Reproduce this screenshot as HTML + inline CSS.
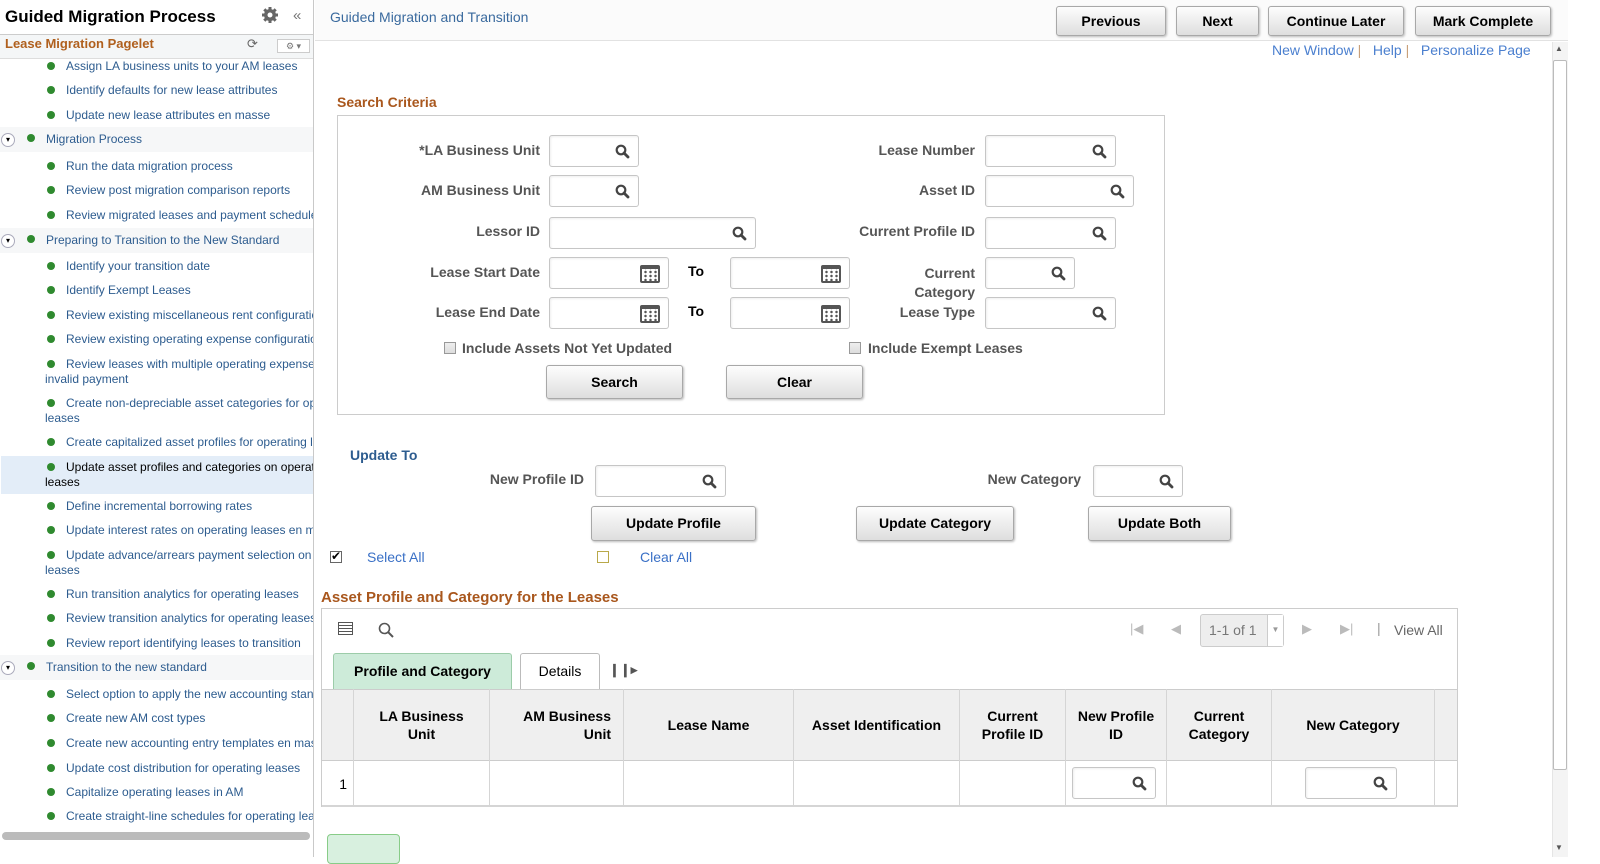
<!DOCTYPE html><html><head><style>
*{box-sizing:border-box}body{margin:0;width:1600px;height:857px;overflow:hidden;background:#fff;font-family:"Liberation Sans",Arial,sans-serif;position:relative}
.a{position:absolute;white-space:nowrap}
#side{position:absolute;left:0;top:0;width:314px;height:857px;border-right:1px solid #c9c9c9;overflow:hidden;background:#fff}
.it{position:absolute;left:0;width:314px;font-size:12px;color:#2d5c8f;line-height:15px;white-space:nowrap}
.it b{position:absolute;left:47px;top:3px;width:8px;height:8px;border-radius:50%;background:#2f8a2f}
.it span{position:absolute;left:66px}
.it i{position:absolute;left:45px;top:15px;font-style:normal}
.grp{background:#f6f7f8;height:25px}
.grp b{left:27px;top:7px}.grp span{left:46px;top:5px}
.tg{position:absolute;left:1px;top:6px;width:14px;height:14px;border:1px solid #aab;border-radius:50%;background:#fff;font-size:8px;line-height:12px;text-align:center;color:#000}
.btn{position:absolute;height:30px;border:1px solid #a8a8a8;border-radius:3px;background:linear-gradient(#fdfdfd,#dedede);box-shadow:1px 1px 2px #bbb;font-weight:bold;font-size:14px;color:#000;text-align:center;line-height:28px}
.lbl{position:absolute;font-size:14px;font-weight:bold;color:#555;text-align:right;white-space:nowrap}
.in{position:absolute;height:32px;border:1px solid #c6c6c6;border-radius:3px;background:#fff;box-shadow:inset 1px 1px 2px #eee}
.in svg{position:absolute;right:8px;top:8px}
.cal{position:absolute;right:8px;top:7px;width:20px;height:18px;border:2px solid #555;border-top-width:4px;border-radius:2px;background:radial-gradient(circle,#555 1px,transparent 1.5px) 1px 1px/5px 4px}
.th{position:absolute;top:689px;height:72px;border-right:1px solid #d5d5d5;font-size:14px;font-weight:bold;color:#000;display:flex;align-items:center;justify-content:center;text-align:center;line-height:18px}
.td{position:absolute;top:761px;height:45px;border-right:1px solid #d5d5d5}
.cb{position:absolute;width:12px;height:12px;border:1px solid #999;background:linear-gradient(#eee,#ddd)}
</style></head><body>
<div id="side">
<div class="a" style="left:5px;top:7px;font-size:17px;font-weight:bold;color:#000">Guided Migration Process</div>
<svg class="a" style="left:261px;top:6px" width="18" height="18" viewBox="0 0 18 18"><circle cx="9" cy="9" r="6" fill="#666"/><g stroke="#666" stroke-width="3"><line x1="9" y1="1" x2="9" y2="17"/><line x1="1" y1="9" x2="17" y2="9"/><line x1="3.3" y1="3.3" x2="14.7" y2="14.7"/><line x1="14.7" y1="3.3" x2="3.3" y2="14.7"/></g><circle cx="9" cy="9" r="2.5" fill="#fff"/></svg>
<div class="a" style="left:293px;top:7px;font-size:15px;color:#777">«</div>
<div class="a" style="left:0;top:34px;width:314px;height:25px;background:#f4f6f7;border-top:1px solid #ccc;border-bottom:1px solid #ddd"></div>
<div class="a" style="left:5px;top:36px;font-size:13px;font-weight:bold;color:#b0601e">Lease Migration Pagelet</div>
<div class="a" style="left:247px;top:36px;font-size:13px;color:#666">⟳</div>
<div class="a" style="left:277px;top:39px;width:33px;height:14px;border:1px solid #ccc;background:#fff;font-size:9px;color:#777;text-align:center;line-height:12px">⚙ ▾</div>
<div class="it" style="top:59px"><b></b><span>Assign LA business units to your AM leases</span></div>
<div class="it" style="top:83px"><b></b><span>Identify defaults for new lease attributes</span></div>
<div class="it" style="top:108px"><b></b><span>Update new lease attributes en masse</span></div>
<div class="it grp" style="top:127px"><div class="tg">▾</div><b></b><span>Migration Process</span></div>
<div class="it" style="top:159px"><b></b><span>Run the data migration process</span></div>
<div class="it" style="top:183px"><b></b><span>Review post migration comparison reports</span></div>
<div class="it" style="top:208px"><b></b><span>Review migrated leases and payment schedules</span></div>
<div class="it grp" style="top:228px"><div class="tg">▾</div><b></b><span>Preparing to Transition to the New Standard</span></div>
<div class="it" style="top:259px"><b></b><span>Identify your transition date</span></div>
<div class="it" style="top:283px"><b></b><span>Identify Exempt Leases</span></div>
<div class="it" style="top:308px"><b></b><span>Review existing miscellaneous rent configuration</span></div>
<div class="it" style="top:332px"><b></b><span>Review existing operating expense configuration</span></div>
<div class="it" style="top:357px"><b></b><span>Review leases with multiple operating expenses</span><i>invalid payment</i></div>
<div class="it" style="top:396px"><b></b><span>Create non-depreciable asset categories for operating</span><i>leases</i></div>
<div class="it" style="top:435px"><b></b><span>Create capitalized asset profiles for operating leases</span></div>
<div class="a" style="left:1px;top:456px;width:313px;height:38px;background:#e3edf8"></div>
<div class="it" style="top:460px;color:#000"><b></b><span>Update asset profiles and categories on operating</span><i>leases</i></div>
<div class="it" style="top:499px"><b></b><span>Define incremental borrowing rates</span></div>
<div class="it" style="top:523px"><b></b><span>Update interest rates on operating leases en masse</span></div>
<div class="it" style="top:548px"><b></b><span>Update advance/arrears payment selection on operating</span><i>leases</i></div>
<div class="it" style="top:587px"><b></b><span>Run transition analytics for operating leases</span></div>
<div class="it" style="top:611px"><b></b><span>Review transition analytics for operating leases</span></div>
<div class="it" style="top:636px"><b></b><span>Review report identifying leases to transition</span></div>
<div class="it grp" style="top:655px"><div class="tg">▾</div><b></b><span>Transition to the new standard</span></div>
<div class="it" style="top:687px"><b></b><span>Select option to apply the new accounting standard</span></div>
<div class="it" style="top:711px"><b></b><span>Create new AM cost types</span></div>
<div class="it" style="top:736px"><b></b><span>Create new accounting entry templates en masse</span></div>
<div class="it" style="top:761px"><b></b><span>Update cost distribution for operating leases</span></div>
<div class="it" style="top:785px"><b></b><span>Capitalize operating leases in AM</span></div>
<div class="it" style="top:809px"><b></b><span>Create straight-line schedules for operating leases</span></div>
<div class="a" style="left:2px;top:832px;width:308px;height:8px;border-radius:4px;background:#bbb"></div>
</div>

<div class="a" style="left:315px;top:0;width:1253px;height:41px;background:#fbfbfb;border-bottom:1px solid #e2e2e2"></div>
<div class="a" style="left:330px;top:9px;font-size:14px;color:#3a6a9e">Guided Migration and Transition</div>
<div class="btn" style="left:1056px;top:6px;width:110px">Previous</div>
<div class="btn" style="left:1176px;top:6px;width:83px">Next</div>
<div class="btn" style="left:1268px;top:6px;width:136px">Continue Later</div>
<div class="btn" style="left:1415px;top:6px;width:136px">Mark Complete</div>
<div class="a" style="left:1272px;top:42px;font-size:14px;color:#4a7fcf">New Window <span style="color:#c9a07a">|</span> &nbsp; Help <span style="color:#c9a07a">|</span> &nbsp; Personalize Page</div>
<div class="a" style="left:1552px;top:42px;width:16px;height:815px;background:#f4f4f4;border-left:1px solid #e5e5e5"></div>
<div class="a" style="left:1553px;top:60px;width:14px;height:710px;background:#fff;border:1px solid #bbb;border-radius:2px"></div>
<div class="a" style="left:1555px;top:44px;font-size:8px;color:#555">▲</div>
<div class="a" style="left:1555px;top:843px;font-size:8px;color:#555">▼</div>

<div class="a" style="left:337px;top:94px;font-size:14px;font-weight:bold;color:#a9571d">Search Criteria</div>
<div class="a" style="left:337px;top:115px;width:828px;height:300px;border:1px solid #ccc"></div>
<svg width="0" height="0" style="position:absolute"><defs><g id="mg"><circle cx="6" cy="6" r="4.3" fill="none" stroke="#444" stroke-width="2.2"/><line x1="9" y1="9" x2="13" y2="13" stroke="#444" stroke-width="2.8" stroke-linecap="round"/></g></defs></svg>

<div class="lbl" style="left:340px;width:200px;top:142px">*LA Business Unit</div>
<div class="in" style="left:549px;top:135px;width:90px"><svg width="15" height="15"><use href="#mg"/></svg></div>
<div class="lbl" style="left:340px;width:200px;top:182px">AM Business Unit</div>
<div class="in" style="left:549px;top:175px;width:90px"><svg width="15" height="15"><use href="#mg"/></svg></div>
<div class="lbl" style="left:340px;width:200px;top:223px">Lessor ID</div>
<div class="in" style="left:549px;top:217px;width:207px"><svg width="15" height="15"><use href="#mg"/></svg></div>
<div class="lbl" style="left:340px;width:200px;top:264px">Lease Start Date</div>
<div class="in" style="left:549px;top:257px;width:120px"><div class="cal"></div></div>
<div class="a" style="left:688px;top:263px;font-size:14px;font-weight:bold">To</div>
<div class="in" style="left:730px;top:257px;width:120px"><div class="cal"></div></div>
<div class="lbl" style="left:340px;width:200px;top:304px">Lease End Date</div>
<div class="in" style="left:549px;top:297px;width:120px"><div class="cal"></div></div>
<div class="a" style="left:688px;top:303px;font-size:14px;font-weight:bold">To</div>
<div class="in" style="left:730px;top:297px;width:120px"><div class="cal"></div></div>
<div class="cb" style="left:444px;top:342px"></div>
<div class="lbl" style="left:462px;top:340px">Include Assets Not Yet Updated</div>
<div class="btn" style="left:546px;top:365px;width:137px;height:34px;line-height:32px">Search</div>
<div class="btn" style="left:726px;top:365px;width:137px;height:34px;line-height:32px">Clear</div>

<div class="lbl" style="left:775px;width:200px;top:142px">Lease Number</div>
<div class="in" style="left:985px;top:135px;width:131px"><svg width="15" height="15"><use href="#mg"/></svg></div>
<div class="lbl" style="left:775px;width:200px;top:182px">Asset ID</div>
<div class="in" style="left:985px;top:175px;width:149px"><svg width="15" height="15"><use href="#mg"/></svg></div>
<div class="lbl" style="left:775px;width:200px;top:223px">Current Profile ID</div>
<div class="in" style="left:985px;top:217px;width:131px"><svg width="15" height="15"><use href="#mg"/></svg></div>
<div class="lbl" style="left:775px;width:200px;top:264px;line-height:19px">Current<br>Category</div>
<div class="in" style="left:985px;top:257px;width:90px"><svg width="15" height="15"><use href="#mg"/></svg></div>
<div class="lbl" style="left:775px;width:200px;top:304px">Lease Type</div>
<div class="in" style="left:985px;top:297px;width:131px"><svg width="15" height="15"><use href="#mg"/></svg></div>
<div class="cb" style="left:849px;top:342px"></div>
<div class="lbl" style="left:868px;top:340px">Include Exempt Leases</div>

<div class="a" style="left:350px;top:447px;font-size:14px;font-weight:bold;color:#2d5c8f">Update To</div>
<div class="lbl" style="left:384px;width:200px;top:471px">New Profile ID</div>
<div class="in" style="left:595px;top:465px;width:131px"><svg width="15" height="15"><use href="#mg"/></svg></div>
<div class="lbl" style="left:881px;width:200px;top:471px">New Category</div>
<div class="in" style="left:1093px;top:465px;width:90px"><svg width="15" height="15"><use href="#mg"/></svg></div>
<div class="btn" style="left:591px;top:506px;width:165px;height:35px;line-height:33px">Update Profile</div>
<div class="btn" style="left:856px;top:506px;width:158px;height:35px;line-height:33px">Update Category</div>
<div class="btn" style="left:1088px;top:506px;width:143px;height:35px;line-height:33px">Update Both</div>
<div class="cb" style="left:330px;top:551px;background:#fff;border-color:#666;font-size:12px;line-height:9px;text-align:center">✔</div>
<div class="a" style="left:367px;top:549px;font-size:14px;color:#3a70c6">Select All</div>
<div class="cb" style="left:597px;top:551px;background:#fff;border-color:#b9a94a"></div>
<div class="a" style="left:640px;top:549px;font-size:14px;color:#3a70c6">Clear All</div>

<div class="a" style="left:321px;top:589px;font-size:15px;font-weight:bold;color:#a9571d">Asset Profile and Category for the Leases</div>
<div class="a" style="left:321px;top:608px;width:1137px;height:199px;border:1px solid #ccc"></div>
<div class="a" style="left:338px;top:622px;width:15px;height:13px;border:1px solid #555;background:repeating-linear-gradient(#fff 0 2px,#555 2px 3px)"></div>
<svg class="a" style="left:378px;top:622px" width="16" height="16"><circle cx="6.5" cy="6.5" r="5" fill="none" stroke="#555" stroke-width="1.6"/><line x1="10" y1="10" x2="15" y2="15" stroke="#555" stroke-width="2"/></svg>
<div class="a" style="left:1130px;top:621px;font-size:13px;color:#bbb">|◀</div>
<div class="a" style="left:1171px;top:621px;font-size:13px;color:#bbb">◀</div>
<div class="a" style="left:1200px;top:614px;width:84px;height:33px;border:1px solid #ccc;border-radius:3px;background:#eee"></div>
<div class="a" style="left:1267px;top:615px;width:16px;height:31px;background:#fff;border-left:1px solid #ccc;font-size:8px;color:#999;text-align:center;line-height:29px">▼</div>
<div class="a" style="left:1209px;top:622px;font-size:14px;color:#777">1-1 of 1</div>
<div class="a" style="left:1302px;top:621px;font-size:13px;color:#bbb">▶</div>
<div class="a" style="left:1340px;top:621px;font-size:13px;color:#bbb">▶|</div>
<div class="a" style="left:1377px;top:620px;font-size:14px;color:#999">|</div>
<div class="a" style="left:1394px;top:622px;font-size:14px;color:#666">View All</div>
<div class="a" style="left:333px;top:653px;width:179px;height:36px;background:#cdebd9;border:1px solid #9ccca9;border-bottom:none;border-radius:3px 3px 0 0;font-size:14px;font-weight:bold;text-align:center;line-height:34px">Profile and Category</div>
<div class="a" style="left:520px;top:653px;width:80px;height:36px;background:#fff;border:1px solid #bbb;border-bottom:none;border-radius:3px 3px 0 0;font-size:14px;text-align:center;line-height:34px">Details</div>
<div class="a" style="left:609px;top:662px;font-size:13px;color:#555;font-weight:bold">❙❙▸</div>
<div class="a" style="left:322px;top:689px;width:1135px;height:72px;background:#efefef;border-top:1px solid #ccc;border-bottom:1px solid #ccc"></div>
<div class="th" style="left:321px;width:33px"></div>
<div class="th" style="left:354px;width:136px">LA Business<br>Unit</div>
<div class="th" style="left:490px;width:134px;justify-content:flex-end;padding-right:12px;text-align:right">AM Business<br>Unit</div>
<div class="th" style="left:624px;width:170px">Lease Name</div>
<div class="th" style="left:794px;width:166px">Asset Identification</div>
<div class="th" style="left:960px;width:106px">Current<br>Profile ID</div>
<div class="th" style="left:1066px;width:101px">New Profile<br>ID</div>
<div class="th" style="left:1167px;width:105px">Current<br>Category</div>
<div class="th" style="left:1272px;width:163px">New Category</div>
<div class="td" style="left:321px;width:33px;font-size:14px;text-align:right;padding:15px 6px 0 0">1</div>
<div class="td" style="left:354px;width:136px"></div><div class="td" style="left:490px;width:134px"></div><div class="td" style="left:624px;width:170px"></div><div class="td" style="left:794px;width:166px"></div><div class="td" style="left:960px;width:106px"></div><div class="td" style="left:1066px;width:101px"></div><div class="td" style="left:1167px;width:105px"></div><div class="td" style="left:1272px;width:163px"></div>
<div class="a" style="left:322px;top:805px;width:1135px;height:2px;background:#d5d5d5"></div>
<div class="in" style="left:1072px;top:767px;width:84px"><svg width="15" height="15"><use href="#mg"/></svg></div>
<div class="in" style="left:1305px;top:767px;width:92px"><svg width="15" height="15"><use href="#mg"/></svg></div>
<div class="a" style="left:327px;top:834px;width:73px;height:30px;border:1px solid #8c8;border-radius:4px;background:#d8f0df"></div>
</body></html>
